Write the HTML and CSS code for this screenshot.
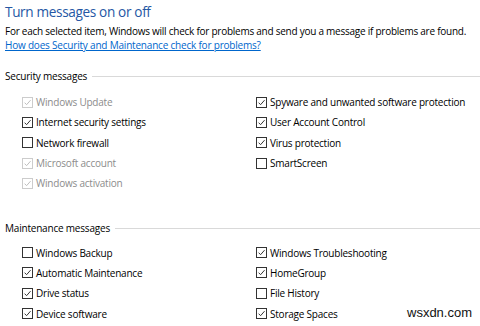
FILE: index.html
```html
<!DOCTYPE html>
<html>
<head>
<meta charset="utf-8">
<link rel="stylesheet" href="styles.css">
</head>
<body>
<div class="page">
  <h1 class="title">Turn messages on or off</h1>
  <p class="desc">For each selected item, Windows will check for problems and send you a message if problems are found.</p>
  <a class="link" href="#">How does Security and Maintenance check for problems?</a>

  <div class="group group-security">
    <div class="group-head"><span>Security messages</span><span class="rule"></span></div>
    <div class="items">
      <div class="item disabled checked"><span class="box"><svg viewBox="0 0 10 10"><path d="M1.8 5.2 L4 7.4 L8.4 2.4"/></svg></span>Windows Update</div>
      <div class="item checked"><span class="box"><svg viewBox="0 0 10 10"><path d="M1.8 5.2 L4 7.4 L8.4 2.4"/></svg></span>Spyware and unwanted software protection</div>
      <div class="item checked"><span class="box"><svg viewBox="0 0 10 10"><path d="M1.8 5.2 L4 7.4 L8.4 2.4"/></svg></span>Internet security settings</div>
      <div class="item checked"><span class="box"><svg viewBox="0 0 10 10"><path d="M1.8 5.2 L4 7.4 L8.4 2.4"/></svg></span>User Account Control</div>
      <div class="item"><span class="box"></span>Network firewall</div>
      <div class="item checked"><span class="box"><svg viewBox="0 0 10 10"><path d="M1.8 5.2 L4 7.4 L8.4 2.4"/></svg></span>Virus protection</div>
      <div class="item disabled checked"><span class="box"><svg viewBox="0 0 10 10"><path d="M1.8 5.2 L4 7.4 L8.4 2.4"/></svg></span>Microsoft account</div>
      <div class="item"><span class="box"></span>SmartScreen</div>
      <div class="item disabled checked"><span class="box"><svg viewBox="0 0 10 10"><path d="M1.8 5.2 L4 7.4 L8.4 2.4"/></svg></span>Windows activation</div>
    </div>
  </div>

  <div class="group group-maint">
    <div class="group-head"><span>Maintenance messages</span><span class="rule"></span></div>
    <div class="items">
      <div class="item"><span class="box"></span>Windows Backup</div>
      <div class="item checked"><span class="box"><svg viewBox="0 0 10 10"><path d="M1.8 5.2 L4 7.4 L8.4 2.4"/></svg></span>Windows Troubleshooting</div>
      <div class="item checked"><span class="box"><svg viewBox="0 0 10 10"><path d="M1.8 5.2 L4 7.4 L8.4 2.4"/></svg></span>Automatic Maintenance</div>
      <div class="item checked"><span class="box"><svg viewBox="0 0 10 10"><path d="M1.8 5.2 L4 7.4 L8.4 2.4"/></svg></span>HomeGroup</div>
      <div class="item checked"><span class="box"><svg viewBox="0 0 10 10"><path d="M1.8 5.2 L4 7.4 L8.4 2.4"/></svg></span>Drive status</div>
      <div class="item"><span class="box"></span>File History</div>
      <div class="item checked"><span class="box"><svg viewBox="0 0 10 10"><path d="M1.8 5.2 L4 7.4 L8.4 2.4"/></svg></span>Device software</div>
      <div class="item checked"><span class="box"><svg viewBox="0 0 10 10"><path d="M1.8 5.2 L4 7.4 L8.4 2.4"/></svg></span>Storage Spaces</div>
    </div>
  </div>

  <div class="watermark">wsxdn.com</div>
</div>
</body>
</html>
```

FILE: styles.css
```css
* { box-sizing: border-box; }
html, body { margin: 0; padding: 0; background: #fff; }
body {
  font-family: "Open Sans", "Noto Sans", "Liberation Sans", sans-serif;
  color: #000;
  width: 480px;
  height: 326px;
  overflow: hidden;
}
.page {
  position: relative;
  padding: 2px 0 0 5px;
  height: 326px;
}
.title {
  margin: 0;
  font-weight: 400;
  font-size: 13.6px;
  line-height: 20px;
  color: #2557a4;
  letter-spacing: -0.35px;
}
.desc {
  margin: 2px 0 0 0;
  font-size: 10px;
  line-height: 14px;
  letter-spacing: -0.25px;
  white-space: nowrap;
}
.link {
  display: block;
  font-size: 10px;
  line-height: 14px;
  color: #0066cc;
  text-decoration: underline;
  letter-spacing: -0.2px;
}
.group-head {
  display: flex;
  align-items: center;
  font-size: 10px;
  line-height: 14px;
  letter-spacing: -0.2px;
}
.group-head .rule {
  flex: 1;
  height: 1px;
  background: #d9d9d9;
  margin-left: 5px;
}
.group-security { margin-top: 17px; }
.group-maint { margin-top: 28px; }
.items {
  display: grid;
  grid-template-columns: 234px 1fr;
  grid-auto-rows: 20.3px;
  padding-left: 17px;
  margin-top: 9px;
}
.group-maint .items { margin-top: 7px; }
.item {
  display: flex;
  align-items: center;
  font-size: 10px;
  letter-spacing: -0.22px;
  color: #000;
  white-space: nowrap;
}
.box {
  width: 11px;
  height: 11px;
  border: 1px solid #333;
  background: #fff;
  margin-right: 3px;
  flex: none;
  display: flex;
}
.box svg {
  width: 9px;
  height: 9px;
  fill: none;
  stroke: #333;
  stroke-width: 1.1;
}
.item.disabled { color: #8c8c8c; }
.item.disabled .box { border-color: #cccccc; }
.item.disabled .box svg { stroke: #bdbdbd; }
.watermark {
  position: absolute;
  left: 407px;
  top: 305px;
  font-family: "Liberation Sans", Arial, sans-serif;
  font-size: 13px;
  line-height: 16px;
  color: #111;
}
```
